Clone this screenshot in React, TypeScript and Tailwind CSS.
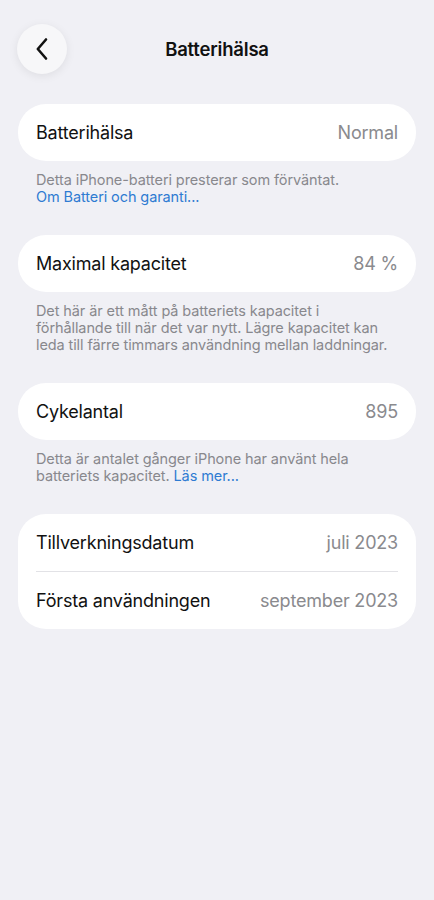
import React from "react";

const font = { fontFamily: "Inter, 'Noto Sans', sans-serif" };

function Row({ label, value }: { label: string; value: string }) {
  return (
    <div className="flex h-[57px] items-center justify-between px-[18px]">
      <span className="text-[18px] tracking-[-0.2px] text-[#111111]">{label}</span>
      <span className="text-[18px] tracking-[-0.2px] text-[#8a8a8e]">{value}</span>
    </div>
  );
}

function Card({ children }: { children: React.ReactNode }) {
  return <div className="rounded-[28px] bg-white">{children}</div>;
}

function Footer({ children }: { children: React.ReactNode }) {
  return (
    <p className="px-[18px] pt-[10px] text-[14.5px] leading-[17px] tracking-[-0.1px] text-[#88888d]">
      {children}
    </p>
  );
}

export default function App() {
  return (
    <div className="min-h-[900px] w-[434px] bg-[#f0f0f5]" style={font}>
      <div className="relative flex h-[96px] items-start px-[17px] pt-[24px]">
        <button className="flex h-[50px] w-[50px] items-center justify-center rounded-full bg-[#f7f7f9] shadow-[0_2px_10px_rgba(0,0,0,0.08)]">
          <svg width="16" height="24" viewBox="0 0 16 24" fill="none">
            <path d="M12 2.5 L3.8 12 L12 21.5" stroke="#111" strokeWidth="2.6" strokeLinecap="round" strokeLinejoin="round" />
          </svg>
        </button>
        <div className="absolute left-0 right-0 top-[36px] text-center text-[18.5px] font-semibold tracking-[-0.2px] text-[#111]">
          Batterihälsa
        </div>
      </div>

      <div className="flex flex-col px-[18px] pt-[8px]">
        <Card>
          <Row label="Batterihälsa" value="Normal" />
        </Card>
        <Footer>
          Detta iPhone-batteri presterar som förväntat.
          <br />
          <span className="text-[#2e7bd2]">Om Batteri och garanti...</span>
        </Footer>

        <div className="h-[30px]" />
        <Card>
          <Row label="Maximal kapacitet" value="84 %" />
        </Card>
        <Footer>
          Det här är ett mått på batteriets kapacitet i förhållande till när det var nytt. Lägre kapacitet kan leda till färre timmars användning mellan laddningar.
        </Footer>

        <div className="h-[30px]" />
        <Card>
          <Row label="Cykelantal" value="895" />
        </Card>
        <Footer>
          Detta är antalet gånger iPhone har använt hela batteriets kapacitet.{" "}
          <span className="text-[#2e7bd2]">Läs mer...</span>
        </Footer>

        <div className="h-[30px]" />
        <Card>
          <Row label="Tillverkningsdatum" value="juli 2023" />
          <div className="mx-[18px] h-px bg-[#e2e2e6]" />
          <Row label="Första användningen" value="september 2023" />
        </Card>
      </div>
    </div>
  );
}
